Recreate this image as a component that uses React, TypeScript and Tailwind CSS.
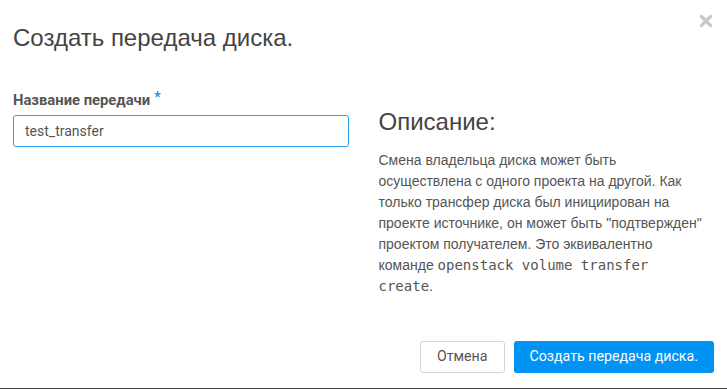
export default function App() {
    return (
        <div className="relative h-[389px] w-[727px] overflow-hidden border-b border-[#444] bg-white font-['Roboto',sans-serif] text-[#555]">
            <button className="absolute right-[14px] top-[14px] text-[#c8c8c8]" aria-label="Закрыть">
                <svg width="14" height="14" viewBox="0 0 14 14">
                    <path d="M2.5 2.5 L11.5 11.5 M11.5 2.5 L2.5 11.5" stroke="currentColor" strokeWidth="3.2" strokeLinecap="round" />
                </svg>
            </button>
            <div className="px-[13px] pt-[22px]">
                <h1 className="font-['Liberation_Sans',sans-serif] text-[24px] leading-[32px] text-[#444]">
                    Создать передача диска.
                </h1>
            </div>
            <div className="grid grid-cols-2 gap-[30px] px-[13px] pt-[36px]">
                <div>
                    <label className="flex items-start text-[14.8px] font-bold leading-[20px] text-[#555]">
                        Название передачи
                        <span className="ml-[4px] -mt-[3px] text-[14px] text-[#0d95f2]">*</span>
                    </label>
                    <input
                        className="mt-[5px] h-[32px] w-full rounded-[3px] border border-[#2ba0f0] px-[11px] text-[14px] text-[#555] caret-[#333] outline-none"
                        defaultValue="test_transfer"
                        autoFocus
                    />
                </div>
                <div className="pt-[17px]">
                    <h3 className="font-['Liberation_Sans',sans-serif] text-[24px] leading-[30px] text-[#444]">
                        Описание:
                    </h3>
                    <p className="mt-[13px] max-w-[330px] font-['Liberation_Sans',sans-serif] text-[14px] leading-[21px] text-[#555]">
                        Смена владельца диска может быть осуществлена с одного проекта на другой. Как только
                        трансфер диска был инициирован на проекте источнике, он может быть "подтвержден" проектом
                        получателем. Это эквивалентно команде{" "}
                        <code className="font-['DejaVu_Sans_Mono',monospace] text-[14px] leading-none">
                            openstack volume transfer create
                        </code>
                        .
                    </p>
                </div>
            </div>
            <div className="absolute bottom-[15px] right-[13px] flex gap-[9px]">
                <button className="h-[32px] rounded-[3px] border border-[#d6d6d6] bg-white px-[16px] text-[14.2px] text-[#555]">
                    Отмена
                </button>
                <button className="h-[32px] rounded-[3px] bg-[#0093f4] px-[16px] text-[14.2px] text-white">
                    Создать передача диска.
                </button>
            </div>
        </div>
    );
}
